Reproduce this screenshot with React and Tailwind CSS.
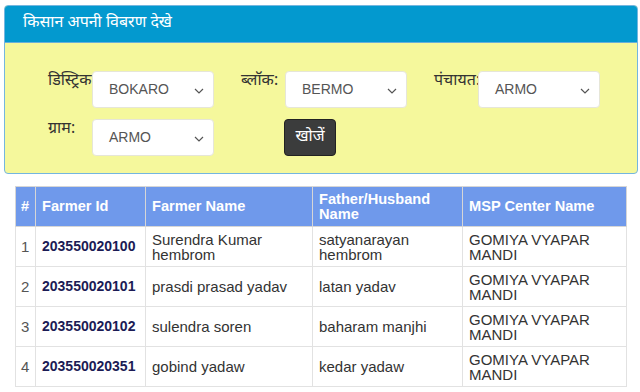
import React from "react";

const deva = { fontFamily: '"Noto Sans Devanagari", "Lohit Devanagari", "Noto Serif Devanagari", "Liberation Sans", sans-serif' };

function Chevron() {
  return (
    <svg width="10" height="6" viewBox="0 0 10 6" className="absolute right-[9px] top-[16px]">
      <path d="M1 1 L5 5 L9 1" fill="none" stroke="#555" strokeWidth="1.2" />
    </svg>
  );
}

function Select({ value }) {
  return (
    <div className="relative w-[122px] h-[37px] bg-white rounded-[4px] border border-[#e6e6d8] flex items-center pl-[16px] text-[14px] text-[#555] font-['Liberation_Sans',Arial,sans-serif]">
      {value}
      <Chevron />
    </div>
  );
}

function Field({ label, value }) {
  return (
    <div className="flex items-start w-[193px]">
      <div className="w-[44px] text-[16px] leading-[22px] text-[#333] whitespace-nowrap overflow-visible" style={deva}>{label}</div>
      <Select value={value} />
    </div>
  );
}

const rows = [
  ["1", "203550020100", "Surendra Kumar hembrom", "satyanarayan hembrom"],
  ["2", "203550020101", "prasdi prasad yadav", "latan yadav"],
  ["3", "203550020102", "sulendra soren", "baharam manjhi"],
  ["4", "203550020351", "gobind yadaw", "kedar yadaw"],
];

export default function App() {
  return (
    <div className="w-[640px] h-[392px] bg-white overflow-hidden font-['Liberation_Sans',Arial,sans-serif]">
      <div className="pt-[5px] pl-[4px] pr-[2px]">
        <div className="border border-[#74b6df] rounded-[4px] overflow-hidden bg-[#f5f89c]">
          <div className="h-[37px] bg-[#0399cf] flex items-center pl-[18px] text-white text-[16px] border-b border-[#6ab0d8]" style={deva}>
            किसान अपनी विबरण देखे
          </div>
          <div className="pt-[28px] pb-[17px] pl-[43px]">
            <div className="flex">
              <Field label="डिस्ट्रिक" value="BOKARO" />
              <Field label="ब्लॉक:" value="BERMO" />
              <Field label="पंचायत:" value="ARMO" />
            </div>
            <div className="flex mt-[11px]">
              <Field label="ग्राम:" value="ARMO" />
              <div className="pl-[43px]">
                <div className="w-[52px] h-[37px] bg-[#3b3c3c] border border-[#222] rounded-[4px] text-white text-[16px] flex items-center justify-center" style={deva}>
                  खोजें
                </div>
              </div>
            </div>
          </div>
        </div>
      </div>

      <div className="mt-[12px] ml-[15px] w-[611px]">
        <table className="w-full border-collapse text-[15px] leading-[15px] table-fixed">
          <colgroup>
            <col className="w-[20px]" />
            <col className="w-[110px]" />
            <col className="w-[167px]" />
            <col className="w-[150px]" />
            <col className="w-[164px]" />
          </colgroup>
          <thead>
            <tr className="bg-[#6f99eb] text-white font-bold h-[40px] text-[14.6px]">
              <th className="border border-[#d6d6d6] text-left px-[5px] align-middle">#</th>
              <th className="border border-[#d6d6d6] text-left px-[6px] align-middle">Farmer Id</th>
              <th className="border border-[#d6d6d6] text-left px-[6px] align-middle">Farmer Name</th>
              <th className="border border-[#d6d6d6] text-left px-[6px] align-middle">Father/Husband Name</th>
              <th className="border border-[#d6d6d6] text-left px-[6px] align-middle">MSP Center Name</th>
            </tr>
          </thead>
          <tbody className="text-[#333]">
            {rows.map((r) => (
              <tr key={r[0]} className="h-[40px] bg-white">
                <td className="border border-[#e2e2e2] px-[5px] text-[#555] align-middle">{r[0]}</td>
                <td className="border border-[#e2e2e2] px-[6px] font-bold text-[14px] text-[#1b1b55] align-middle">{r[1]}</td>
                <td className="border border-[#e2e2e2] px-[6px] align-middle">{r[2]}</td>
                <td className="border border-[#e2e2e2] px-[6px] align-middle">{r[3]}</td>
                <td className="border border-[#e2e2e2] px-[6px] align-middle">GOMIYA VYAPAR MANDI</td>
              </tr>
            ))}
          </tbody>
        </table>
      </div>
    </div>
  );
}
